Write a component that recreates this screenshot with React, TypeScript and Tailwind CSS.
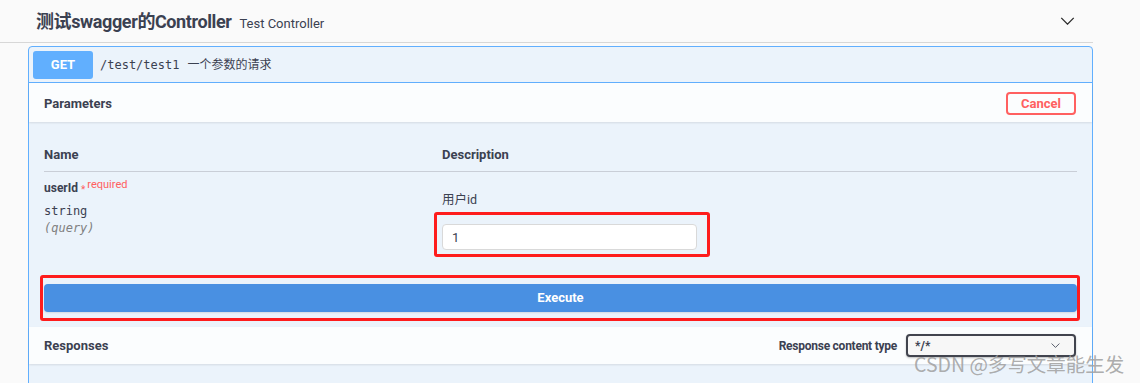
const sans = "font-['Roboto','Noto_Sans_CJK_SC',sans-serif]";
const mono = "font-['DejaVu_Sans_Mono','Noto_Sans_CJK_SC',monospace]";

const ChevronDown = ({ className }: { className?: string }) => (
  <svg viewBox="0 0 16 9" className={className} fill="none">
    <path d="M1 1l7 7 7-7" stroke="currentColor" strokeWidth="1.5" />
  </svg>
);

export default function App() {
  return (
    <div
      className={`relative h-[383px] w-[1140px] overflow-hidden bg-[#fafafa] text-[#3b4151] ${sans}`}
    >
      <div className="w-[1093px]">
        {/* tag header */}
        <div className="flex h-[43px] items-center border-b border-[#d7d7d7] pl-[36px] pr-[18px]">
          <div className="flex items-baseline">
            <span className="text-[18px] font-bold tracking-[-0.4px]">
              测试swagger的Controller
            </span>
            <span className="ml-[8px] text-[13px]">Test Controller</span>
          </div>
          <ChevronDown className="ml-auto h-[8px] w-[15px] text-[#2b2b2b]" />
        </div>

        {/* operation block */}
        <div className="ml-[28px] mt-[3px] rounded-[4px] border border-[#61affe] bg-[#ebf3fb]">
          <div className="flex h-[36px] items-center border-b border-[#61affe] pl-[4px]">
            <div className="flex h-[28px] w-[60px] items-center justify-center rounded-[3px] bg-[#61affe] text-[13px] font-bold text-white">
              GET
            </div>
            <span className={`ml-[7px] text-[12px] ${mono}`}>/test/test1</span>
            <span className="ml-[8px] text-[12px]">一个参数的请求</span>
          </div>

          <div className="flex h-[39px] items-center justify-between bg-white/80 px-[15px] pt-[2px] shadow-[0_1px_2px_rgba(0,0,0,0.1)]">
            <span className="text-[13px] font-bold">Parameters</span>
            <button className="mr-[1px] h-[23px] w-[70px] rounded-[4px] border-2 border-[#ff6060] text-[13px] font-bold text-[#ff6060]">
              Cancel
            </button>
          </div>

          <div className="px-[15px]">
            <div className="grid h-[50px] grid-cols-[398px_1fr] items-end border-b border-[#c9ced7] pb-[9px] text-[13px] font-bold">
              <span className="leading-[14px]">Name</span>
              <span className="leading-[14px]">Description</span>
            </div>

            <div className="grid grid-cols-[398px_1fr]">
              <div className="pt-[8px]">
                <div className="flex items-start leading-[16px]">
                  <span className="text-[12px] font-bold">userId</span>
                  <span className="ml-[3px] mt-[2px] text-[10px] text-[#ff6060]">*</span>
                  <span className="ml-[2px] -mt-[3px] text-[11px] text-[#ff6060]">required</span>
                </div>
                <div className={`mt-[5px] text-[12px] leading-[16px] ${mono}`}>string</div>
                <div className={`mt-[1px] text-[12px] italic leading-[16px] text-[#808080] ${mono}`}>
                  (query)
                </div>
              </div>
              <div className="pt-[20px]">
                <div className="text-[12.5px] leading-[16px]">用户id</div>
                <div className="relative mt-[16px] w-[255px]">
                  <input
                    defaultValue="1"
                    className="block h-[26px] w-full rounded-[4px] border border-[#d9d9d9] bg-white px-[9px] text-[13px] outline-none"
                  />
                  <div className="pointer-events-none absolute -bottom-[7px] -left-[8px] -right-[13px] -top-[12px] rounded-[3px] border-[3px] border-[#fe1c1c]" />
                </div>
              </div>
            </div>

            <div className="relative mt-[34px]">
              <button className="block h-[28px] w-full rounded-[4px] bg-[#4990e2] text-[13px] font-bold text-white shadow-[0_1px_2px_rgba(0,0,0,0.1)]">
                Execute
              </button>
              <div className="pointer-events-none absolute -bottom-[9px] -left-[4px] -right-[3px] -top-[9px] rounded-[3px] border-[3px] border-[#fe1c1c]" />
            </div>
          </div>

          <div className="mt-[15px] flex h-[37px] items-center justify-between bg-white/80 px-[15px] shadow-[0_1px_2px_rgba(0,0,0,0.1)]">
            <span className="text-[13px] font-bold">Responses</span>
            <div className="flex items-center">
              <span className="text-[12px] font-bold tracking-[-0.25px]">Response content type</span>
              <div className="ml-[9px] mr-[1px] flex h-[23px] w-[170px] items-center justify-between rounded-[4px] border-2 border-[#41444e] bg-[#f7f7f7] pl-[7px] pr-[14px] shadow-[0_1px_2px_rgba(0,0,0,0.25)]">
                <span className="text-[12px] font-bold">*/*</span>
                <ChevronDown className="h-[5px] w-[9px] text-[#3b4151]" />
              </div>
            </div>
          </div>
          <div className="h-[40px]" />
        </div>
      </div>

      <div className="pointer-events-none absolute left-[914px] top-[352px] font-['Noto_Sans_CJK_SC',sans-serif] text-[19.5px] leading-[24px] text-[#a3a3a3]/90">
        CSDN @多写文章能生发
      </div>
    </div>
  );
}
